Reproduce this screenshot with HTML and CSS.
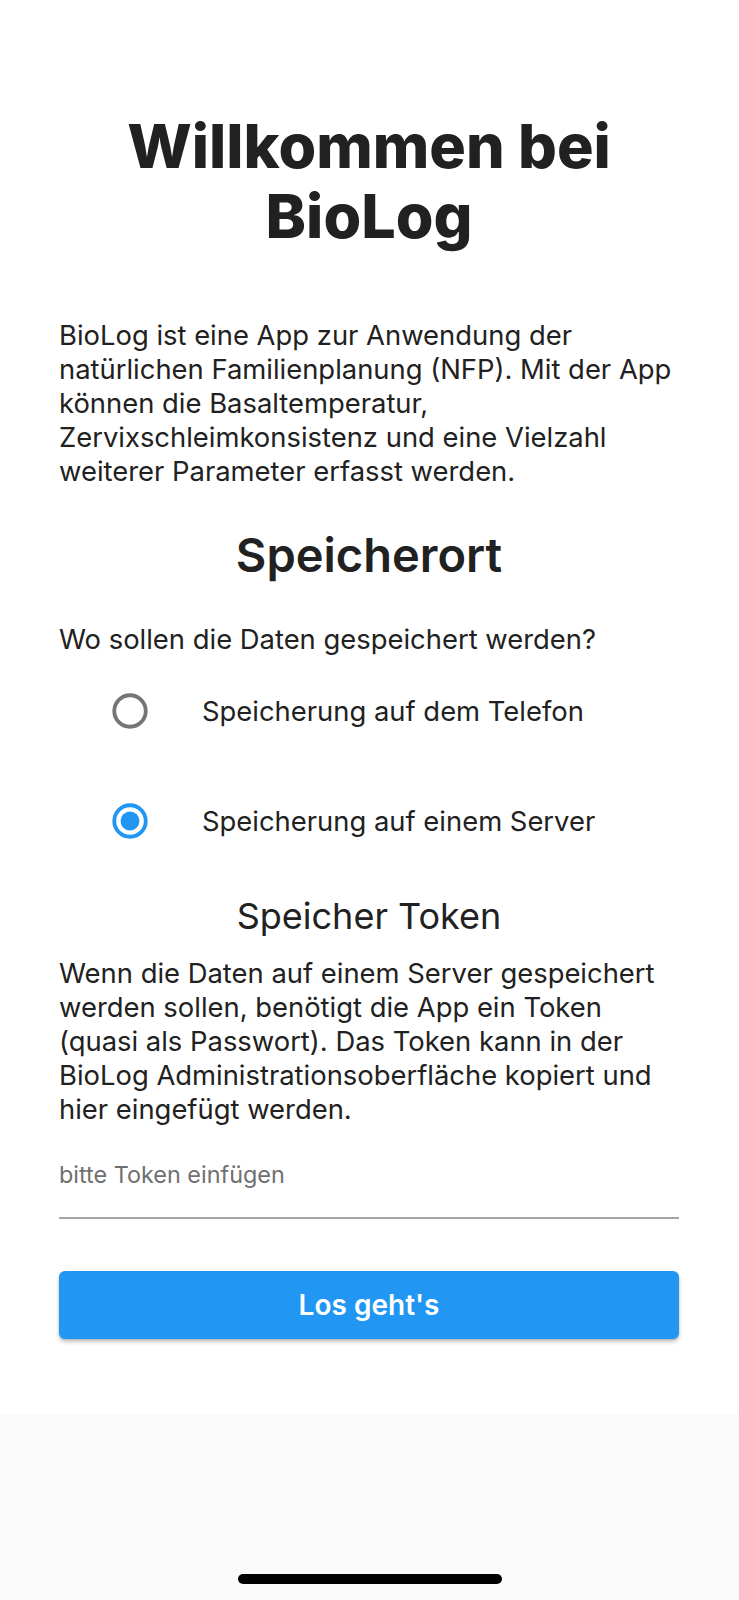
FILE: index.html
```html
<!DOCTYPE html>
<html lang="de">
<head>
<meta charset="utf-8">
<title>BioLog</title>
<link rel="stylesheet" href="styles.css">
</head>
<body>
<main class="screen">
  <section class="content">
    <h1 class="title">Willkommen bei BioLog</h1>
    <p class="text intro">BioLog ist eine App zur Anwendung der natürlichen Familienplanung (NFP). Mit der App können die Basaltemperatur, Zervixschleimkonsistenz und eine Vielzahl weiterer Parameter erfasst werden.</p>
    <h2 class="heading">Speicherort</h2>
    <p class="text question">Wo sollen die Daten gespeichert werden?</p>
    <div class="options">
      <label class="option">
        <svg class="radio" viewBox="0 0 16 16" width="36" height="36"><circle cx="8" cy="8" r="7" fill="none" stroke="#757575" stroke-width="1.7"/></svg>
        <span class="option-label">Speicherung auf dem Telefon</span>
      </label>
      <label class="option">
        <svg class="radio" viewBox="0 0 16 16" width="36" height="36"><circle cx="8" cy="8" r="7" fill="none" stroke="#2196F3" stroke-width="1.7"/><circle cx="8" cy="8" r="4.2" fill="#2196F3"/></svg>
        <span class="option-label">Speicherung auf einem Server</span>
      </label>
    </div>
    <h3 class="subheading">Speicher Token</h3>
    <p class="text">Wenn die Daten auf einem Server gespeichert werden sollen, benötigt die App ein Token (quasi als Passwort). Das Token kann in der BioLog Administrationsoberfläche kopiert und hier eingefügt werden.</p>
    <input class="token" type="text" placeholder="bitte Token einfügen">
    <button class="start" type="button">Los geht's</button>
  </section>
  <footer class="bottom">
    <div class="home-indicator"></div>
  </footer>
</main>
</body>
</html>
```

FILE: styles.css
```css
* { box-sizing: border-box; }

html, body {
  margin: 0;
  padding: 0;
  background: #ffffff;
}

body {
  font-family: Inter, Roboto, "Liberation Sans", sans-serif;
  color: #212121;
}

.screen {
  display: flex;
  flex-direction: column;
  min-height: 1600px;
}

.content {
  height: 1414px;
  padding: 111px 60px 0 59px;
  display: flex;
  flex-direction: column;
  background: #ffffff;
}

.title {
  margin: 0 0 67px;
  font-size: 61px;
  line-height: 70px;
  font-weight: 800;
  text-align: center;
  color: #212121;
  padding: 0 40px;
}

.text {
  margin: 0;
  font-size: 27.4px;
  line-height: 34px;
  font-weight: 400;
  color: #212121;
}

.heading {
  margin: 39px 0 0;
  font-size: 47px;
  line-height: 56px;
  font-weight: 600;
  text-align: center;
}

.question {
  margin-top: 39px;
}

.options {
  display: flex;
  flex-direction: column;
}

.option {
  display: flex;
  align-items: center;
  height: 110px;
  padding-left: 53px;
  gap: 54px;
}

.radio {
  flex: none;
  display: block;
}

.option-label {
  font-size: 27.4px;
  line-height: 34px;
}

.subheading {
  margin: 19px 0 19px;
  font-size: 36px;
  line-height: 42px;
  font-weight: 400;
  text-align: center;
}

.token {
  display: block;
  width: 100%;
  margin: 20px 0 0;
  padding: 14px 0 27px;
  border: 0;
  border-bottom: 2px solid #a4a4a4;
  font-family: Inter, Roboto, "Liberation Sans", sans-serif;
  font-size: 23.4px;
  line-height: 30px;
  color: #212121;
  background: transparent;
  outline: none;
}

.token::placeholder {
  color: #6f6f6f;
}

.start {
  display: block;
  width: 100%;
  height: 68px;
  margin-top: 52px;
  border: 0;
  border-radius: 6px;
  background: #2196F3;
  color: #ffffff;
  font-family: Inter, Roboto, "Liberation Sans", sans-serif;
  font-size: 28px;
  font-weight: 600;
  box-shadow: 0 3px 4px rgba(0, 0, 0, 0.22), 0 1px 2px rgba(0, 0, 0, 0.12);
}

.bottom {
  flex: 1;
  height: 186px;
  background: #fafafa;
  display: flex;
  justify-content: center;
  padding-top: 160px;
}

.home-indicator {
  width: 264px;
  height: 10px;
  border-radius: 5px;
  background: #000000;
}
```
